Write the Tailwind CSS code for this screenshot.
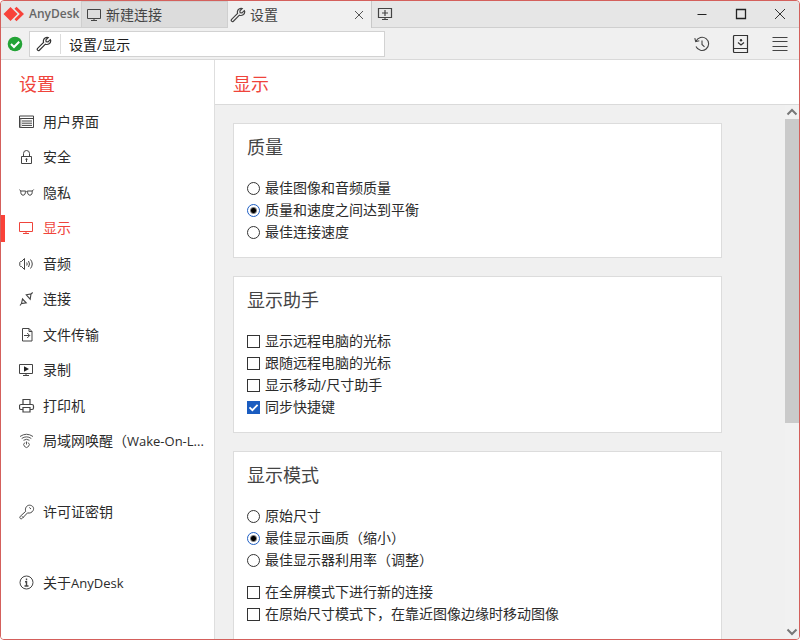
<!DOCTYPE html>
<html lang="zh-CN">
<head>
<meta charset="utf-8">
<meta name="viewport" content="width=device-width, initial-scale=1">
<title>AnyDesk</title>
<script src="https://cdn.jsdelivr.net/npm/@tailwindcss/browser@4"></script>
</head>
<body class="h-screen overflow-hidden bg-white font-['Open_Sans','Noto_Sans_CJK_SC',sans-serif] text-sm text-[#2b2b2b]">
<svg class="hidden">
  <symbol id="monitor" viewBox="0 0 16 16"><path d="M1.500 2.500h13v9h-13zM8 11.500v2M5 13.500h6"/></symbol>
  <symbol id="wrench" viewBox="0 0 16 16"><path stroke-width="1.200" d="M14.300 3.600 12 5.900 10.100 5.700 9.900 3.900 12.200 1.500C10 .9 7.600 2.300 7.400 4.600c-.1.700 0 1.200.2 1.800L1.600 12.400c-.5.600-.5 1.300 0 1.800s1.200.5 1.800 0l6-6c2.600 1 5.500-.8 5.300-3.600 0-.4-.2-.7-.4-1Z"/></symbol>
</svg>
<div class="flex h-full flex-col overflow-hidden rounded-sm border border-[#d4605c] bg-[#f0f0f0]">

  <header class="flex h-[27px] shrink-0 border-b border-[#cfcfcf] bg-[#e6e6e6]">
    <div class="flex w-20 shrink-0 items-center gap-1 pl-0.5">
      <svg class="h-4 w-[22px]" viewBox="0 0 22 16" fill="#f8423a" aria-hidden="true"><path d="M.5 8 7.500 1l7 7-7 7zM11.500 2.800 13.500.8 21 8l-7.500 7.200-2-2L16.800 8z"/></svg>
      <span class="text-xs font-semibold text-[#666]">AnyDesk</span>
    </div>
    <nav class="flex min-w-0" aria-label="标签">
      <button class="flex w-[147px] items-center gap-1 border border-b-0 border-[#cfcfcf] bg-[#dcdcdc] px-1 text-left text-[#444]">
        <svg class="size-4 fill-none stroke-[#444]"><use href="#monitor"/></svg>新建连接
      </button>
      <div class="-mb-px flex w-36 items-center border-r border-[#c8c8c8] bg-[#f0f0f0] pr-1 pl-0.5">
        <button class="flex flex-1 items-center gap-1 text-left text-[#444]">
          <svg class="size-4 fill-none stroke-[#444]"><use href="#wrench"/></svg>设置
        </button>
        <button class="flex size-4 items-center justify-center" aria-label="关闭标签"><svg class="size-2 stroke-[#555]" viewBox="0 0 8 8"><path d="m0 0 8 8M8 0 0 8"/></svg></button>
      </div>
      <button class="pl-[5px]" aria-label="新建标签"><svg class="size-4 fill-none stroke-[#444]" viewBox="0 0 16 16"><path d="M1.500 2.500h13v9h-13zM8 4v6M5 7h6M8 11.500v2M5 13.500h6" stroke-width="1.200"/></svg></button>
    </nav>
    <div class="ml-auto flex">
      <button class="flex w-[39px] items-center justify-center" aria-label="最小化"><svg class="size-3 stroke-[#222]" viewBox="0 0 12 12"><path d="M1.500 6.500h9"/></svg></button>
      <button class="flex w-[39px] items-center justify-center" aria-label="最大化"><svg class="size-3 fill-none stroke-[#222]" viewBox="0 0 12 12"><path d="M1.500 1.500h9v9h-9z" stroke-width="1.300"/></svg></button>
      <button class="flex w-[39px] items-center justify-center" aria-label="关闭"><svg class="size-3 stroke-[#333]" viewBox="0 0 12 12"><path d="m1 1 10 10M11 1 1 11"/></svg></button>
    </div>
  </header>

  <div class="flex h-8 shrink-0 items-center border-b border-[#d9d9d9]">
    <svg class="ml-1.5 size-4" viewBox="0 0 16 16" aria-hidden="true"><circle cx="8" cy="8" r="7.300" fill="#23a336"/><path d="m4 8 3 3 5.200-5.200" fill="none" stroke="#fff" stroke-width="2"/></svg>
    <div class="ml-1.5 flex h-[26px] w-[356px] items-center border border-[#d2d2d2] bg-white">
      <svg class="ml-1.5 size-4 fill-none stroke-[#333]" aria-hidden="true"><use href="#wrench"/></svg>
      <span class="ml-2 h-5 w-px bg-[#dcdcdc]"></span>
      <input type="text" value="设置/显示" aria-label="地址" class="h-full min-w-0 flex-1 bg-transparent pl-2 text-[#1c1c1c] outline-none">
    </div>
    <div class="ml-auto flex">
      <button class="flex w-[39px] items-center justify-center" aria-label="历史记录"><svg class="size-4 fill-none stroke-[#444]" viewBox="0 0 16 16"><path d="M2 5.200A6.600 6.600 0 1 1 2 10.500M.8 2.200 1.700 5.700 5.300 4.800M8 4.500v4l2.500 2.300" stroke-width="1.100"/></svg></button>
      <button class="flex w-[39px] items-center justify-center" aria-label="地址簿"><svg class="size-[18px] fill-none stroke-[#333]" viewBox="0 0 18 18"><path d="M2.500.5h13v17h-13a1 1 0 0 1-1-1v-15a1 1 0 0 1 1-1ZM1.500 13.500h14M6 7.500l3 2.500 3-2.500" stroke-width="1.200"/><circle cx="9" cy="5.300" r="1.200" fill="#333" stroke="none"/></svg></button>
      <button class="flex w-[39px] items-center justify-center" aria-label="菜单"><svg class="size-4 stroke-[#444]" viewBox="0 0 16 16"><path d="M.5 1.500h15M.5 5.500h15M.5 10.500h15M.5 14.500h15"/></svg></button>
    </div>
  </div>

  <div class="flex min-h-0 flex-1">
    <aside class="flex w-[214px] shrink-0 flex-col border-r border-[#dedede] bg-white pb-[38px]">
      <h1 class="mt-2.5 mb-1.5 pl-[18px] text-lg leading-7 text-[#ef443b]">设置</h1>
      <nav class="grid flex-1 auto-rows-fr" aria-label="设置">
        <a href="#" class="flex items-center gap-2 pl-[18px] whitespace-nowrap"><svg class="size-4 shrink-0 fill-none stroke-[#444]" viewBox="0 0 16 16"><path d="M.5 2h14v11.500H.5zM.5 4.500h14M3 7h10M3 9.200h10M3 11.400h10"/><path d="M1.800 4.500v9" stroke="#777"/></svg>用户界面</a>
        <a href="#" class="flex items-center gap-2 pl-[18px] whitespace-nowrap"><svg class="size-4 shrink-0 fill-none stroke-[#444]" viewBox="0 0 16 16"><path d="M2.500 7.500h10v7h-10zM4.500 7.500V4.500a3 3 0 0 1 6 0v3M7.500 10v3"/><circle cx="7.500" cy="10.300" r=".7"/></svg>安全</a>
        <a href="#" class="flex items-center gap-2 pl-[18px] whitespace-nowrap"><svg class="size-4 shrink-0 fill-none stroke-[#444]" viewBox="0 0 16 16"><path d="M.3 4.500 1.800 6H6.200Q7.500 7.300 8.800 6H13.200L14.700 4.500M1.800 6c-.2 2.500.5 4.200 2.300 4.200S6.500 8.500 6.400 6.300M13.200 6c.2 2.500-.5 4.200-2.300 4.200S8.500 8.500 8.600 6.300"/></svg>隐私</a>
        <a href="#" aria-current="page" class="flex items-center gap-2 whitespace-nowrap text-[#ef443b]"><span class="h-[27px] w-1 bg-[#fa4238]"></span><svg class="ml-1.5 size-4 shrink-0 fill-none stroke-[#ef443b]" viewBox="0 0 16 16"><path d="M.5 2.500h13v9H.5zM7 11.500v2M4 13.500h6"/></svg>显示</a>
        <a href="#" class="flex items-center gap-2 pl-[18px] whitespace-nowrap"><svg class="size-4 shrink-0 fill-none stroke-[#444]" viewBox="0 0 16 16"><path d="M5.500 2.500v11L2.500 10.500H1.500L.8 9.500v-3L1.500 5.500h1zM7.700 6.500q1 1.500 0 3M9.500 5q2 3 0 6M11.500 3.500q3.500 4.500 0 9"/></svg>音频</a>
        <a href="#" class="flex items-center gap-2 pl-[18px] whitespace-nowrap"><svg class="size-4 shrink-0 fill-none stroke-[#444]" viewBox="0 0 16 16"><path d="m1 14.500 1.500-2M3.500 8l3.700 3.900-4.700.6zM13.700 1.500l-1.700 1.500M7.300 3.800 12 3l-.8 5.200z" stroke-width="1.100"/></svg>连接</a>
        <a href="#" class="flex items-center gap-2 pl-[18px] whitespace-nowrap"><svg class="size-4 shrink-0 fill-none stroke-[#444]" viewBox="0 0 16 16"><path d="M3.500 1.500h6.500l3 3v9.500h-9.500zM10 1.500v3h3M5 8.500h5.500M8.200 6l2.500 2.500L8.200 11"/></svg>文件传输</a>
        <a href="#" class="flex items-center gap-2 pl-[18px] whitespace-nowrap"><svg class="size-4 shrink-0 fill-none stroke-[#444]" viewBox="0 0 16 16"><path d="M.5 2.500h13v9H.5zM7 11.500v2M4 13.500h6"/><path d="m5 4.200 5 2.800-5 2.800z" fill="#222" stroke="none"/></svg>录制</a>
        <a href="#" class="flex items-center gap-2 pl-[18px] whitespace-nowrap"><svg class="size-4 shrink-0 fill-none stroke-[#444]" viewBox="0 0 16 16"><path d="M4 6.500v-5h7v5M4 11.500H2A1.500 1.500 0 0 1 .5 10V8A1.500 1.500 0 0 1 2 6.500h11A1.500 1.500 0 0 1 14.500 8v2a1.500 1.500 0 0 1-1.500 1.500h-2M4 9.500h7v4.500H4z" stroke-width="1.200"/></svg>打印机</a>
        <a href="#" class="flex items-center gap-2 pl-[18px] whitespace-nowrap"><svg class="size-4 shrink-0 fill-none stroke-[#555]" viewBox="0 0 16 16"><path d="M1 3.500q6.500-4.500 13 0M2.700 5.500q4.800-3.300 9.600 0M4.500 7.300q3-2 6 0M7.500 8.500v3M5.900 9.500a2.700 2.700 0 1 0 3.200 0"/></svg><span>局域网唤醒（<span class="text-[13px]">Wake-On-L...</span></span></a>
        <a href="#" class="row-start-12 flex items-center gap-2 pl-[18px] whitespace-nowrap"><svg class="size-4 shrink-0 fill-none stroke-[#444]" viewBox="0 0 16 16"><path d="M6.700 7.300C5.700 4.500 7.500 1.200 10.500 1.200s5 2.600 3.700 5.200C13 8.600 10.700 9.500 8.500 8.900L3.300 14.300c-.7.600-1.500.7-2.100.1s-.5-1.400 0-2zM3 12.300l1.300 1.300"/><path d="m10.300 3.500 1.700 1.500"/></svg>许可证密钥</a>
        <a href="#" class="row-start-14 flex items-center gap-2 pl-[18px] whitespace-nowrap"><svg class="size-4 shrink-0 fill-none stroke-[#444]" viewBox="0 0 16 16"><circle cx="7.500" cy="7.500" r="6.500"/><path d="M7.500 3.500v1.700M6 6.800h1.500v4.200M5.500 11h4" stroke-width="1.400"/></svg><span>关于<span class="text-[13px]">AnyDesk</span></span></a>
      </nav>
    </aside>

    <main class="flex min-w-0 flex-1 flex-col">
      <h2 class="border-b border-[#dadada] bg-white pt-2.5 pb-1.5 pl-[18px] text-lg leading-7 text-[#ef443b]">显示</h2>
      <div class="flex min-h-0 flex-1">
        <div class="flex min-w-0 flex-1 flex-col gap-[18px] overflow-y-auto px-[18px] pt-[18px] [scrollbar-width:none]">

          <fieldset class="w-full max-w-[489px] shrink-0 border border-[#dcdcdc] bg-white px-[13px] pt-[11px] pb-[14px]" aria-labelledby="quality">
            <h3 id="quality" class="mb-[18px] text-lg leading-6 text-[#444]">质量</h3>
            <label class="flex h-[22px] items-center gap-[5px]"><input type="radio" name="quality" class="size-[13px] appearance-none rounded-full border border-[#333] bg-white checked:border-[#1f5fc4] checked:bg-[radial-gradient(circle,#000_2px,#fff_4px)]">最佳图像和音频质量</label>
            <label class="flex h-[22px] items-center gap-[5px]"><input type="radio" name="quality" checked class="size-[13px] appearance-none rounded-full border border-[#333] bg-white checked:border-[#1f5fc4] checked:bg-[radial-gradient(circle,#000_2px,#fff_4px)]">质量和速度之间达到平衡</label>
            <label class="flex h-[22px] items-center gap-[5px]"><input type="radio" name="quality" class="size-[13px] appearance-none rounded-full border border-[#333] bg-white checked:border-[#1f5fc4] checked:bg-[radial-gradient(circle,#000_2px,#fff_4px)]">最佳连接速度</label>
          </fieldset>

          <fieldset class="w-full max-w-[489px] shrink-0 border border-[#dcdcdc] bg-white px-[13px] pt-[11px] pb-[14px]" aria-labelledby="helper">
            <h3 id="helper" class="mb-[18px] text-lg leading-6 text-[#444]">显示助手</h3>
            <label class="flex h-[22px] items-center gap-[5px]"><input type="checkbox" class="size-[13px] appearance-none border border-[#333] bg-white checked:bg-[#1a5cc0]">显示远程电脑的光标</label>
            <label class="flex h-[22px] items-center gap-[5px]"><input type="checkbox" class="size-[13px] appearance-none border border-[#333] bg-white checked:bg-[#1a5cc0]">跟随远程电脑的光标</label>
            <label class="flex h-[22px] items-center gap-[5px]"><input type="checkbox" class="size-[13px] appearance-none border border-[#333] bg-white checked:bg-[#1a5cc0]">显示移动/尺寸助手</label>
            <label class="flex h-[22px] items-center gap-[5px]">
              <span class="grid size-[13px]"><input type="checkbox" checked class="peer col-start-1 row-start-1 size-[13px] appearance-none border border-[#333] bg-white checked:border-[#1a5cc0] checked:bg-[#1a5cc0]"><svg class="pointer-events-none invisible col-start-1 row-start-1 size-[13px] fill-none stroke-white peer-checked:visible" viewBox="0 0 13 13"><path d="m2.500 6.300 2.900 2.900 5.200-5.400" stroke-width="1.800"/></svg></span>同步快捷键</label>
          </fieldset>

          <fieldset class="w-full max-w-[489px] shrink-0 border border-[#dcdcdc] bg-white px-[13px] pt-[11px] pb-[14px]" aria-labelledby="mode">
            <h3 id="mode" class="mb-[18px] text-lg leading-6 text-[#444]">显示模式</h3>
            <label class="flex h-[22px] items-center gap-[5px]"><input type="radio" name="mode" class="size-[13px] appearance-none rounded-full border border-[#333] bg-white checked:border-[#1f5fc4] checked:bg-[radial-gradient(circle,#000_2px,#fff_4px)]">原始尺寸</label>
            <label class="flex h-[22px] items-center gap-[5px]"><input type="radio" name="mode" checked class="size-[13px] appearance-none rounded-full border border-[#333] bg-white checked:border-[#1f5fc4] checked:bg-[radial-gradient(circle,#000_2px,#fff_4px)]">最佳显示画质（缩小）</label>
            <label class="mb-2.5 flex h-[22px] items-center gap-[5px]"><input type="radio" name="mode" class="size-[13px] appearance-none rounded-full border border-[#333] bg-white checked:border-[#1f5fc4] checked:bg-[radial-gradient(circle,#000_2px,#fff_4px)]">最佳显示器利用率（调整）</label>
            <label class="flex h-[22px] items-center gap-[5px]"><input type="checkbox" class="size-[13px] appearance-none border border-[#333] bg-white checked:bg-[#1a5cc0]">在全屏模式下进行新的连接</label>
            <label class="flex h-[22px] items-center gap-[5px]"><input type="checkbox" class="size-[13px] appearance-none border border-[#333] bg-white checked:bg-[#1a5cc0]">在原始尺寸模式下，在靠近图像边缘时移动图像</label>
          </fieldset>
        </div>

        <div class="flex w-3.5 shrink-0 flex-col bg-[#f1f1f1]">
          <button class="flex h-3.5 items-center justify-center" aria-label="向上滚动"><svg class="h-2 w-3 fill-none stroke-[#777]" viewBox="0 0 12 8"><path d="m1.500 6.500 4.500-4.500 4.500 4.500" stroke-width="2"/></svg></button>
          <div class="flex-1"><div class="h-[60%] bg-[#cacaca]"></div></div>
          <button class="flex h-3.5 items-center justify-center" aria-label="向下滚动"><svg class="h-2 w-3 fill-none stroke-[#777]" viewBox="0 0 12 8"><path d="m1.500 1.500 4.500 4.500 4.500-4.500" stroke-width="2"/></svg></button>
        </div>
      </div>
    </main>
  </div>
</div>
</body>
</html>
